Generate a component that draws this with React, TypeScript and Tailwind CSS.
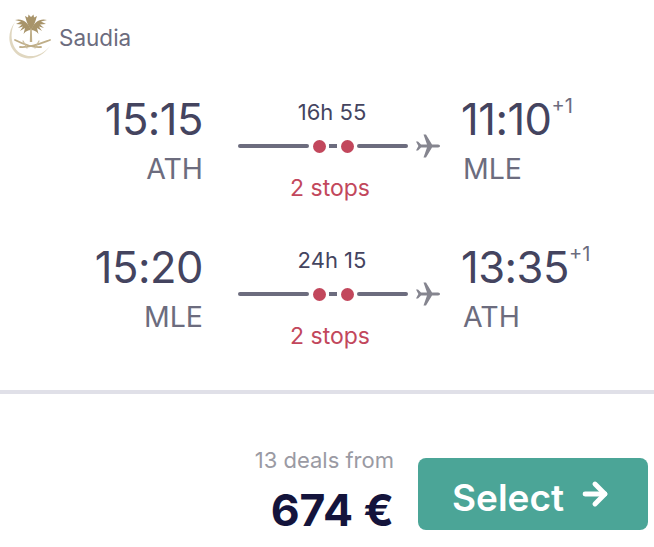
import { ArrowRight } from 'lucide-react';

function SaudiaLogo() {
  return (
    <svg viewBox="0 0 44 46" className="w-[44px] h-[46px] shrink-0">
      {/* crescent */}
      <path d="M7 8 C-1 18 -1 33 10 41 C20 48 34 44 42 32 C34 42 22 45 12 39 C3 33 1 19 7 8 Z" fill="#e0d7c0" />
      {/* palm leaves */}
      <path d="M23 16 C20 8 14 4 7 6 L13 7.5 L8 10 L14 10.5 L10 14 L15 12.5 L12 17 L17 14 L15.5 20 C18 17 20 16 23 16 Z" fill="#a8946a" />
      <path d="M23 16 C26 8 32 4 39 6 L33 7.5 L38 10 L32 10.5 L36 14 L31 12.5 L34 17 L29 14 L30.5 20 C28 17 26 16 23 16 Z" fill="#a8946a" />
      <path d="M23 16 C19 10 18 5 17 2 L20 3.5 L20.5 0.5 L23 3 L25.5 0.5 L26 3.5 L29 2 C28 5 27 10 23 16 Z" fill="#a8946a" />
      <path d="M22.2 15 L23.8 15 L24.2 28 L21.8 28 Z" fill="#bfae88" />
      {/* crossed swords */}
      <path d="M7 26 C13 29 24 34 33 33" fill="none" stroke="#bfae88" strokeWidth="1.8" strokeLinecap="round" />
      <path d="M42 26 C34 29 23 34 12 33" fill="none" stroke="#bfae88" strokeWidth="1.8" strokeLinecap="round" />
      <path d="M15 27 L19 34 M31 27 L27 34" stroke="#cbbd9c" strokeWidth="1.2" strokeLinecap="round" />
    </svg>
  );
}

function Plane() {
  return (
    <svg viewBox="0 0 24 24" className="w-[24px] h-[24px] shrink-0 ml-[8px]" fill="#85858f">
      <path d="M0 7.5 L2 7.5 L5 10.6 L11 10.6 L7.5 0.5 L10 0.5 L16 10.6 L22 10.6 C23.4 10.6 24 11.4 24 12 C24 12.6 23.4 13.4 22 13.4 L16 13.4 L10 23.5 L7.5 23.5 L11 13.4 L5 13.4 L2 16.5 L0 16.5 L2.4 12 Z" />
    </svg>
  );
}

function Leg({ dep, from, dur, arr, to }: { dep: string; from: string; dur: string; arr: string; to: string }) {
  return (
    <div className="flex h-[148px]">
      <div className="w-[203px] text-right">
        <div className="text-[43.5px] leading-[56px] text-[#44445f] tracking-[-0.5px]">{dep}</div>
        <div className="text-[28.5px] leading-[44px] text-[#6c6c7e]">{from}</div>
      </div>
      <div className="ml-[35px] w-[203px] flex flex-col items-start">
        <div className="w-[188px] text-center text-[22px] leading-[32px] text-[#44445f] mt-[5px]">{dur}</div>
        <div className="flex items-center h-[26px] mt-[5px]">
          <div className="w-[71px] h-[4px] bg-[#6c6c7e] rounded-full" />
          <div className="w-[13px] h-[13px] rounded-full bg-[#c2475c] ml-[4px]" />
          <div className="w-[8px] h-[4px] bg-[#6c6c7e] ml-[3px]" />
          <div className="w-[13px] h-[13px] rounded-full bg-[#c2475c] ml-[4px]" />
          <div className="w-[51px] h-[4px] bg-[#6c6c7e] rounded-full ml-[3px]" />
          <Plane />
        </div>
        <div className="w-[184px] text-center text-[23px] leading-[32px] text-[#c2475c] mt-[13px]">2 stops</div>
      </div>
      <div className="ml-[20px]">
        <div className="flex items-start">
          <span className="text-[43.5px] leading-[56px] text-[#44445f] tracking-[-0.5px]">{arr}</span>
          <span className="text-[20px] leading-[26px] text-[#6c6c7e] mt-[2px]">+1</span>
        </div>
        <div className="text-[28.5px] leading-[44px] text-[#6c6c7e] ml-[2px]">{to}</div>
      </div>
    </div>
  );
}

export default function App() {
  return (
    <div className="w-[654px] h-[547px] bg-white overflow-hidden font-['Inter',sans-serif]">
      <div className="flex items-start gap-[7px] pt-[14px] pl-[8px] h-[91px]">
        <SaudiaLogo />
        <span className="text-[22.5px] leading-[48px] text-[#6c6c7e]">Saudia</span>
      </div>
      <Leg dep="15:15" from="ATH" dur="16h 55" arr="11:10" to="MLE" />
      <Leg dep="15:20" from="MLE" dur="24h 15" arr="13:35" to="ATH" />
      <div className="h-[4px] bg-[#e0e0e8] mt-[3px]" />
      <div className="flex justify-end pr-[6px] mt-[64px]">
        <div className="text-right mt-[-14px]">
          <div className="text-[22px] leading-[32px] text-[#9a9aa3]">13 deals from</div>
          <div className="text-[44.5px] leading-[50px] font-bold text-[#14143c] mt-[9px]">674 €</div>
        </div>
        <button className="ml-[24px] w-[230px] h-[72px] rounded-[8px] bg-[#4ba597] text-white text-[37px] font-semibold flex items-center justify-center gap-[14px] pr-[2px]">
          <span className="mt-[7px]">Select</span>
          <ArrowRight className="w-[34px] h-[34px]" strokeWidth={3.5} />
        </button>
      </div>
    </div>
  );
}
